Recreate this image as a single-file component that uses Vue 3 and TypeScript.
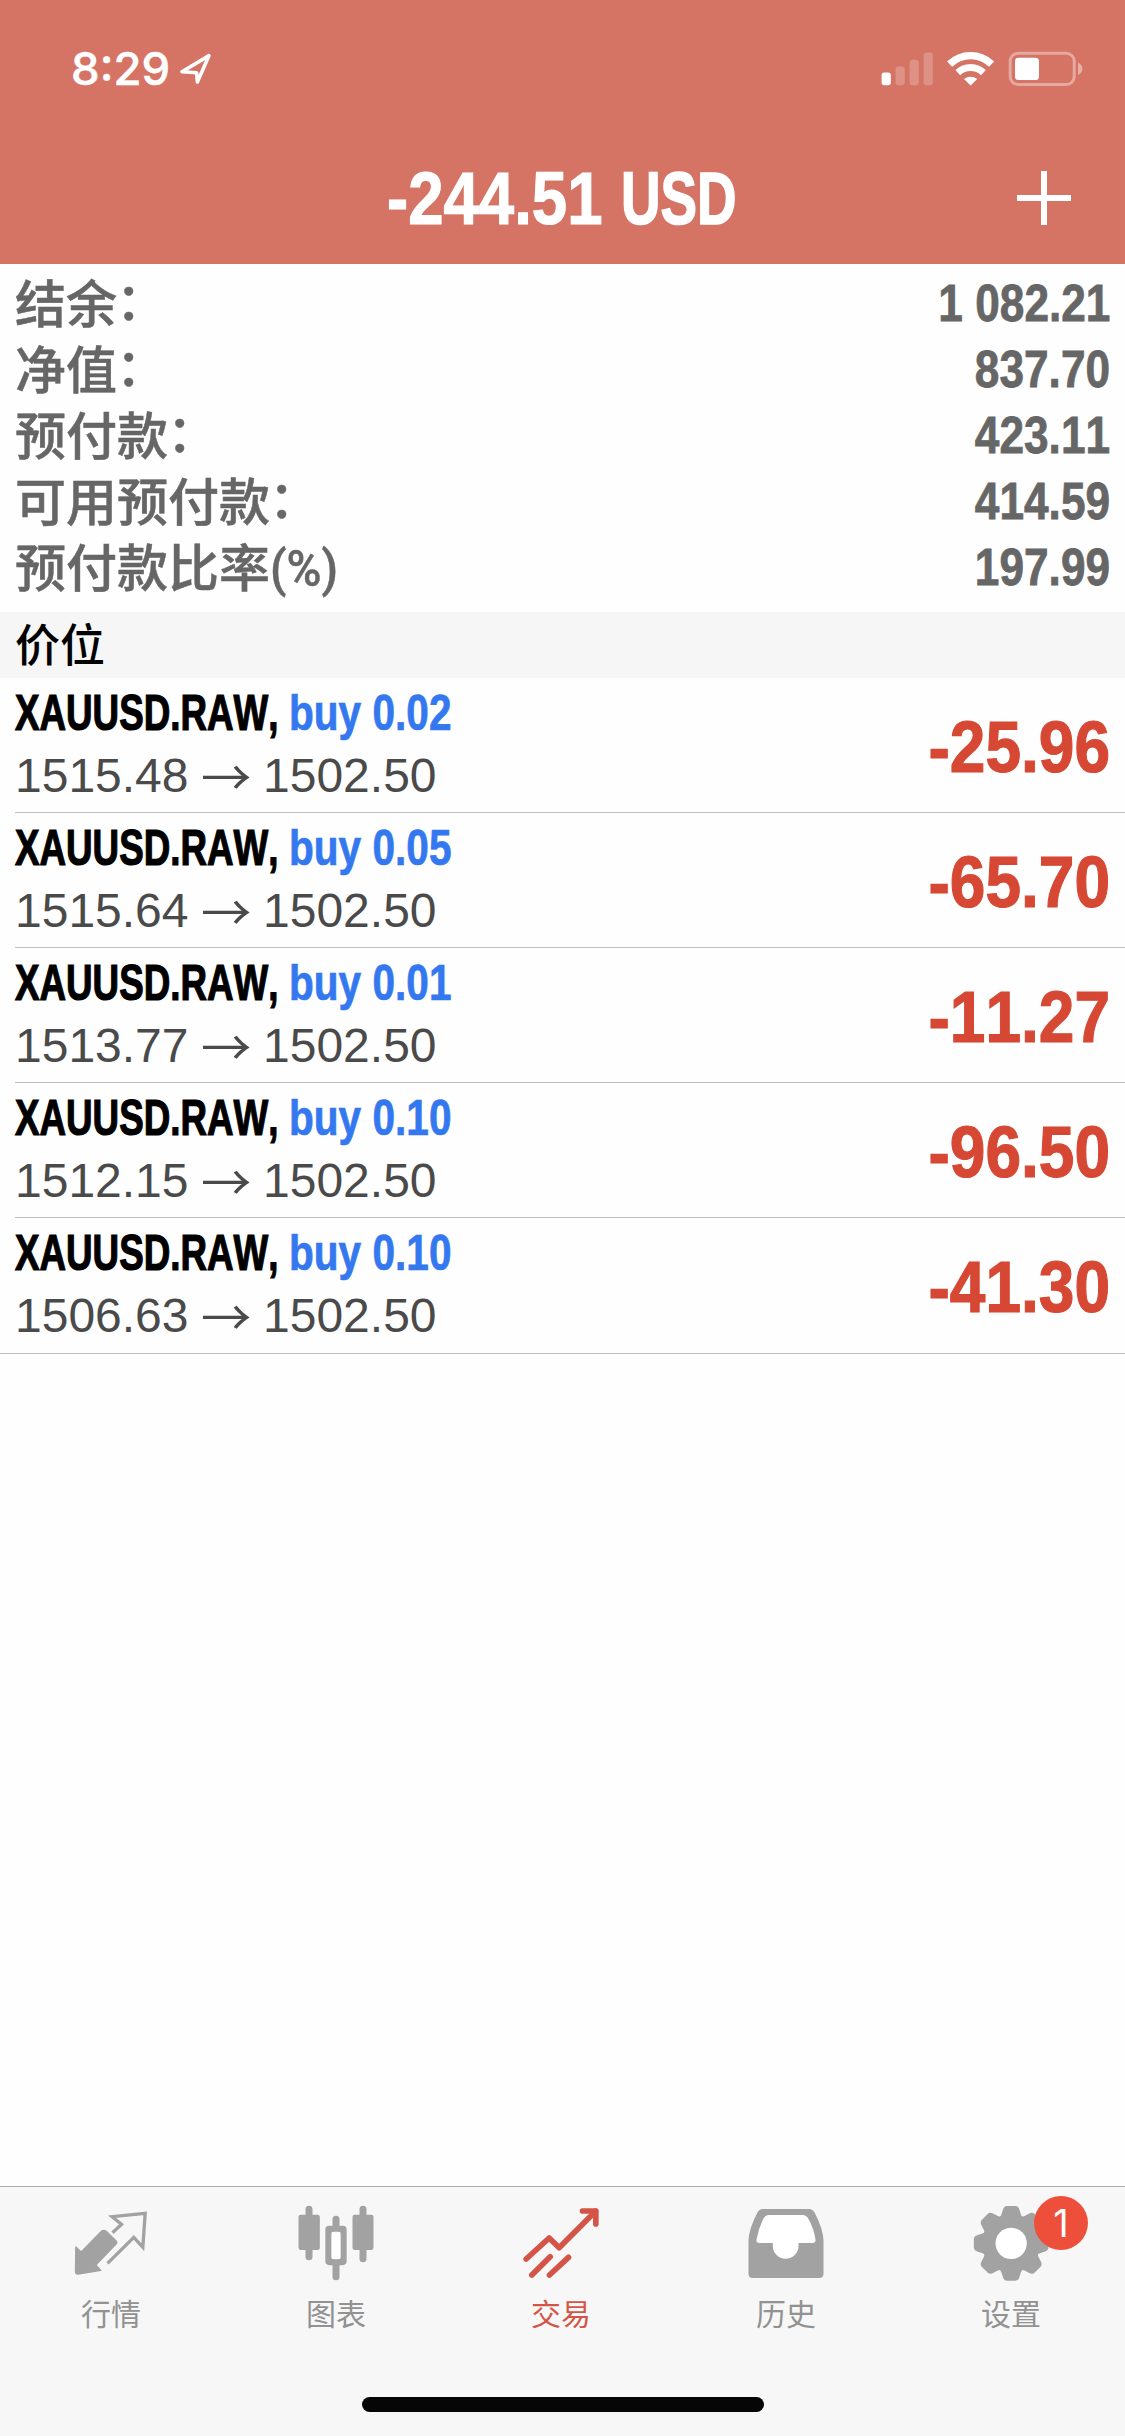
<script setup lang="ts">
interface SummaryLine {
  label: string
  colon?: boolean
  unit?: string
  value: string
}

interface Position {
  symbol: string
  side: string
  volume: string
  open: string
  current: string
  profit: string
}

interface Tab {
  id: string
  label: string
  viewBox: string
  active?: boolean
  badge?: number
}

const summary: SummaryLine[] = [
  { label: '结余', colon: true, value: '1 082.21' },
  { label: '净值', colon: true, value: '837.70' },
  { label: '预付款', colon: true, value: '423.11' },
  { label: '可用预付款', colon: true, value: '414.59' },
  { label: '预付款比率', unit: '(%)', value: '197.99' },
]

const positions: Position[] = [
  { symbol: 'XAUUSD.RAW', side: 'buy', volume: '0.02', open: '1515.48', current: '1502.50', profit: '-25.96' },
  { symbol: 'XAUUSD.RAW', side: 'buy', volume: '0.05', open: '1515.64', current: '1502.50', profit: '-65.70' },
  { symbol: 'XAUUSD.RAW', side: 'buy', volume: '0.01', open: '1513.77', current: '1502.50', profit: '-11.27' },
  { symbol: 'XAUUSD.RAW', side: 'buy', volume: '0.10', open: '1512.15', current: '1502.50', profit: '-96.50' },
  { symbol: 'XAUUSD.RAW', side: 'buy', volume: '0.10', open: '1506.63', current: '1502.50', profit: '-41.30' },
]

const tabs: Tab[] = [
  { id: 'quotes', label: '行情', viewBox: '217.5 99 240 240' },
  { id: 'charts', label: '图表', viewBox: '892.5 99 240 240' },
  { id: 'trade', label: '交易', viewBox: '367.5 99 240 240', active: true },
  { id: 'history', label: '历史', viewBox: '142.5 99 240 240' },
  { id: 'settings', label: '设置', viewBox: '817.5 99 240 240', badge: 1 },
]

const toothAngles: number[] = [0, 45, 90, 135, 180, 225, 270, 315]
</script>

<template>
  <div class="screen">
    <header class="header">
      <div class="status">
        <div class="status-left">
          <span class="clock">8:29</span>
          <svg class="locate" width="34" height="34" viewBox="179 52 34 34">
            <path d="M209 55.6 L182 71.8 L196.6 72.8 L197.4 82 Z" fill="none" stroke="#fff" stroke-width="3.6" stroke-linejoin="round" />
          </svg>
        </div>
        <svg class="indicators" width="204" height="36" viewBox="880 51 204 36">
          <rect x="881.6" y="72.6" width="9.2" height="12.6" rx="2.6" fill="#fff" />
          <g fill="#fff" fill-opacity="0.22">
            <rect x="895.6" y="66.6" width="9.2" height="18.6" rx="3" />
            <rect x="909.6" y="59.8" width="9.2" height="25.4" rx="3" />
            <rect x="923.6" y="52.4" width="9.2" height="32.8" rx="3" />
          </g>
          <g fill="none" stroke="#fff">
            <path d="M949.6 64.2 A30 30 0 0 1 991.6 64.2" stroke-width="7.4" />
            <path d="M957.8 72.6 A18.6 18.6 0 0 1 983.4 72.6" stroke-width="7" />
          </g>
          <path d="M964 79 A10.4 10.4 0 0 1 977.2 79 L970.6 85.6 Z" fill="#fff" />
          <rect x="1010.2" y="53.2" width="64" height="31.4" rx="8" fill="none" stroke="#fff" stroke-opacity="0.38" stroke-width="3" />
          <path d="M1078 62.6 Q1082.4 64.6 1082.4 68.8 Q1082.4 73 1078 75 Z" fill="#fff" fill-opacity="0.42" />
          <rect x="1015" y="57.8" width="24" height="22.2" rx="3.6" fill="#fff" />
        </svg>
      </div>
      <div class="nav">
        <h1 class="title">
          <span class="title-amount">-244.51</span>
          <span class="title-currency">USD</span>
        </h1>
        <svg class="add" width="56" height="56" viewBox="0 0 56 56">
          <path d="M28 1 V55 M1 28 H55" stroke="#fff" stroke-width="6" />
        </svg>
      </div>
    </header>

    <section class="summary">
      <div v-for="line in summary" :key="line.label" class="summary-line">
        <span class="summary-label">{{ line.label }}<span v-if="line.colon" class="colon">：</span><span v-if="line.unit" class="unit">{{ line.unit }}</span></span>
        <span class="summary-value">{{ line.value }}</span>
      </div>
    </section>

    <h2 class="section-title"><span>价位</span></h2>

    <ul class="positions">
      <li v-for="(p, i) in positions" :key="i" class="position">
        <div class="deal">
          <div class="deal-head">
            <span class="symbol">{{ p.symbol }},</span>
            <span class="side">{{ p.side }} {{ p.volume }}</span>
          </div>
          <div class="deal-prices">
            <span>{{ p.open }}</span>
            <span class="arrow">→</span>
            <span>{{ p.current }}</span>
          </div>
        </div>
        <span class="profit">{{ p.profit }}</span>
      </li>
    </ul>

    <nav class="tabbar">
      <div class="tabs">
        <div v-for="tab in tabs" :key="tab.id" class="tab" :class="{ active: tab.active }">
          <svg class="tab-icon" width="80" height="80" :viewBox="tab.viewBox">
            <template v-if="tab.id === 'quotes'">
              <path d="M229 231 L245 246 L306 184 Q313 178 320 184 L350 213 Q354 218 349 223 L289 285 L304 301 L236 312 Q228 313 228 305 Z" fill="currentColor" stroke="currentColor" stroke-width="4" stroke-linejoin="round" />
              <path d="M339 188 L366 163 L338 140 L437 130 L430 232 L403 202 L324 280" fill="none" stroke="currentColor" stroke-width="10" />
            </template>
            <template v-else-if="tab.id === 'charts'">
              <rect x="897" y="134" width="64" height="106" rx="7" fill="currentColor" />
              <rect x="1059" y="134" width="63" height="106" rx="7" fill="currentColor" />
              <path d="M928.5 118 V260 M1090.5 118 V266 M1009.5 148 V172 M1009.5 284 V320" stroke="currentColor" stroke-width="21" stroke-linecap="round" />
              <rect x="987" y="177" width="45" height="99" rx="2" fill="none" stroke="currentColor" stroke-width="19" stroke-linejoin="round" />
              <rect x="996" y="185" width="27" height="83" rx="7" fill="#fff" />
            </template>
            <template v-else-if="tab.id === 'trade'">
              <g fill="none" stroke="currentColor" stroke-width="17" stroke-linecap="round" stroke-linejoin="round">
                <path d="M380 267 L449 204 L479 233 L588 124" />
                <path d="M549 123 H589 V162" />
                <path d="M397 315 L452 260 M450 315 L507 262" />
              </g>
            </template>
            <template v-else-if="tab.id === 'history'">
              <path fill="currentColor" d="M190 117 H328 Q340 117 346 129 Q372 180 372 212 V311 Q372 324 359 324 H160 Q147 324 147 311 V212 Q147 180 173 129 Q179 117 190 117 Z" />
              <path fill="#fff" d="M209 135 H309 Q321 135 327 147 Q344 178 348 209 Q349 219 339 219 H297 V228 A38.5 38.5 0 0 1 220 228 V219 H180 Q170 219 171 209 Q176 178 191 147 Q197 135 209 135 Z" />
            </template>
            <template v-else>
              <g transform="translate(935 220)">
                <circle r="87" fill="currentColor" />
                <path v-for="a in toothAngles" :key="a" :transform="`rotate(${a})`" d="M-35 -76 Q-29 -84 -25 -100 Q-22 -112 -12 -112 H12 Q22 -112 25 -100 Q29 -84 35 -76 Z" fill="currentColor" />
                <circle r="47" fill="#fff" />
              </g>
            </template>
          </svg>
          <span class="tab-label">{{ tab.label }}</span>
          <span v-if="tab.badge" class="badge">{{ tab.badge }}</span>
        </div>
      </div>
      <div class="home-indicator"></div>
    </nav>
  </div>
</template>

<style>
body {
  margin: 0;
}
</style>

<style scoped>
.screen {
  display: flex;
  flex-direction: column;
  width: 1125px;
  height: 2436px;
  overflow: hidden;
  background: #fefefe;
  font-family: 'Liberation Sans', 'Noto Sans CJK SC', sans-serif;
  font-kerning: none;
}

.header {
  flex: none;
  height: 264px;
  background: #d57465;
  color: #fff;
}

.status {
  display: flex;
  align-items: center;
  justify-content: space-between;
  box-sizing: border-box;
  height: 132px;
  padding: 6px 41px 0 71px;
}

.status-left {
  display: flex;
  align-items: center;
  gap: 9px;
}

.clock {
  font-family: Inter, sans-serif;
  font-size: 45.5px;
  font-weight: 500;
  line-height: 56px;
  width: 99px;
  white-space: nowrap;
  -webkit-text-stroke: 0.5px currentColor;
}

.nav {
  display: grid;
  grid-template-columns: 1fr auto 1fr;
  align-items: center;
  height: 132px;
}

.title {
  grid-column: 2;
  display: flex;
  width: 351px;
  margin: 0;
  padding-top: 2px;
  font-size: 74.5px;
  line-height: 90px;
  font-weight: 700;
  white-space: nowrap;
}

.title-amount {
  width: 234px;
  flex: none;
  transform: scaleX(0.853);
  transform-origin: left center;
  -webkit-text-stroke: 1.2px currentColor;
}

.title-currency {
  transform: scaleX(0.735);
  transform-origin: left center;
  -webkit-text-stroke: 1.6px currentColor;
}

.add {
  justify-self: end;
  margin-right: 53px;
}

.summary {
  flex: none;
  padding: 6px 15px 12px;
  color: #666;
}

.summary-line {
  display: flex;
  justify-content: space-between;
  height: 66px;
  line-height: 66px;
  white-space: nowrap;
}

.summary-label {
  font-size: 51px;
  font-weight: 500;
  line-height: 71px;
  -webkit-text-stroke: 0.5px currentColor;
}

.colon {
  display: inline-block;
  line-height: 1;
  transform: translate(-1px, -3px);
}

.unit {
  display: inline-block;
  font-family: Roboto, sans-serif;
  font-size: 50px;
  line-height: 1;
  transform: translateY(-1px) scaleX(0.95);
  transform-origin: left center;
}

.summary-value {
  font-size: 52px;
  font-weight: 700;
  transform: scaleX(0.85);
  transform-origin: right center;
  -webkit-text-stroke: 0.8px currentColor;
}

.section-title {
  flex: none;
  height: 66px;
  margin: 0;
  padding-left: 15px;
  background: #f6f6f6;
  color: #000;
  font-family: 'Noto Sans CJK SC', sans-serif;
  font-size: 45px;
  font-weight: 500;
  line-height: 61px;
}

.positions {
  flex: none;
  margin: 0;
  padding: 0 0 0 15px;
  list-style: none;
  border-bottom: 1px solid #bebec0;
}

.position {
  display: flex;
  justify-content: space-between;
  align-items: center;
  box-sizing: border-box;
  height: 135px;
  padding-right: 15px;
  border-bottom: 1px solid #bebec0;
  white-space: nowrap;
}

.position:last-child {
  border-bottom: 0;
}

.deal {
  display: flex;
  flex-direction: column;
  gap: 7px;
  padding-bottom: 2px;
}

.deal-head {
  display: flex;
  height: 56px;
  font-size: 50px;
  font-weight: 700;
  line-height: 56px;
}

.symbol {
  flex: none;
  width: 274px;
  color: #000;
  transform: scaleX(0.735);
  transform-origin: left center;
  -webkit-text-stroke: 1.2px currentColor;
}

.side {
  color: #3478f0;
  transform: scaleX(0.812);
  transform-origin: left center;
  -webkit-text-stroke: 0.7px currentColor;
}

.deal-prices {
  display: flex;
  height: 56px;
  color: #4a4a4a;
  font-size: 48px;
  line-height: 56px;
}

.arrow {
  display: flex;
  justify-content: center;
  width: 74.5px;
  font-family: 'Noto Sans CJK SC', sans-serif;
  transform: translateY(-2px) scaleX(1.05);
}

.profit {
  padding-top: 3px;
  color: #d64833;
  font-size: 73px;
  font-weight: 700;
  line-height: 90px;
  transform: scaleX(0.877);
  transform-origin: right center;
  -webkit-text-stroke: 1.2px currentColor;
}

.tabbar {
  display: flex;
  flex-direction: column;
  align-items: center;
  box-sizing: border-box;
  height: 250px;
  margin-top: auto;
  border-top: 1px solid #acacac;
  background: #f7f7f7;
}

.tabs {
  display: flex;
  width: 100%;
  height: 210px;
}

.tab {
  position: relative;
  display: flex;
  flex: 1;
  flex-direction: column;
  align-items: center;
  padding-top: 16px;
  color: #a2a2a2;
}

.tab-icon {
  margin-right: 1px;
}

.tab-label {
  margin: 7px 3px 0 0;
  color: #929292;
  font-family: 'Noto Sans CJK SC', sans-serif;
  font-size: 30px;
  line-height: 44px;
}

.tab.active,
.tab.active .tab-label {
  color: #d45548;
}

.badge {
  position: absolute;
  top: 9px;
  left: 134px;
  width: 54px;
  height: 54px;
  border-radius: 50%;
  background: #ee4f3b;
  color: #fff;
  font-family: Inter, sans-serif;
  font-size: 38px;
  line-height: 54px;
  text-align: center;
}

.home-indicator {
  width: 402px;
  height: 15px;
  border-radius: 8px;
  background: #060606;
}
</style>
